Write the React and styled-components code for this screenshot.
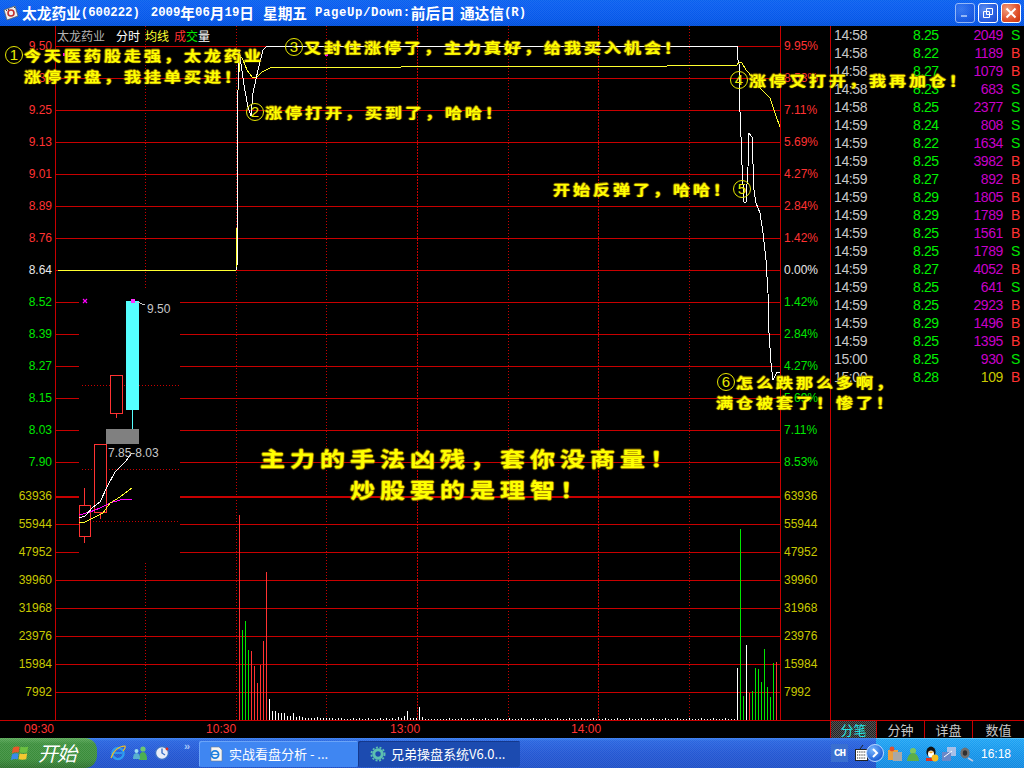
import React from "react";
import styled, { createGlobalStyle } from "styled-components";

const CJK = `"Noto Sans CJK SC", "Liberation Sans", sans-serif`;
const SANS = `"Liberation Sans", "Noto Sans CJK SC", sans-serif`;
const GRID = "#c80000";

const Global = createGlobalStyle`
  html, body { margin: 0; padding: 0; background: #000; }
  * { box-sizing: border-box; }
`;

const Screen = styled.div`
  width: 1024px; height: 768px; display: flex; flex-direction: column;
  background: #000; overflow: hidden; font-family: ${SANS};
`;

/* ---------- title bar ---------- */
const TitleBar = styled.header`
  height: 26px; flex: none; display: flex; align-items: center; padding: 0 3px 0 3px;
  color: #fff; font-weight: 700; white-space: pre;
  background:
    repeating-conic-gradient(rgba(255,255,255,.07) 0 25%, transparent 0 50%) 0 0 / 2px 2px,
    linear-gradient(#0a62ee 0, #0b5ff0 12%, #0558ea 70%, #0050dc 100%);
`;
const TitleIcon = styled.svg`width: 16px; height: 16px; flex: none; margin-right: 3px;`;
const TitleText = styled.div`flex: 1; display: flex; align-items: center; height: 26px;`;
const TitleCn = styled.span`
  font: 700 14.7px/26px ${CJK}; flex: none; margin-left: ${p => p.$ml || 0}px;
`;
const TitleAscii = styled.span`
  font: 700 12.3px/26px "Liberation Mono", monospace; flex: none;
  margin-left: ${p => p.$ml || 0}px; letter-spacing: ${p => p.$ls || 0}px;
`;
const WinButtons = styled.div`display: flex; gap: 3px; flex: none;`;
const WinButton = styled.div`
  width: 20px; height: 20px; border-radius: 3px; border: 1px solid #fff;
  display: flex; align-items: center; justify-content: center; opacity: ${p => p.$dim ? .55 : 1};
  background: ${p => p.$red
    ? "radial-gradient(circle at 30% 30%, #f0a080, #e0502a 60%, #c8300c)"
    : "radial-gradient(circle at 30% 30%, #5a8cf0, #2a5fe0 60%, #1c48c8)"};
`;

/* ---------- work area ---------- */
const Workspace = styled.main`flex: 1; display: flex; position: relative; min-height: 0;`;
const ChartColumn = styled.section`width: 831px; flex: none; display: flex; flex-direction: column; border-right: 1px solid ${GRID};`;
const ChartRow = styled.div`height: 694px; flex: none; display: flex;`;
const Axis = styled.div`
  width: ${p => p.$w}px; flex: none; padding-top: 4px; display: flex; flex-direction: column;
  font-size: 12px; align-items: ${p => p.$right ? "flex-start" : "flex-end"};
  padding-left: ${p => p.$right ? 3 : 0}px; padding-right: ${p => p.$right ? 0 : 3}px;
`;
const AxisLabel = styled.div`
  height: ${p => p.$h}px; line-height: ${p => p.$h}px; color: ${p => p.$c};
  margin-top: ${p => p.$mt || 0}px; white-space: pre;
`;
const Plot = styled.div`width: 726px; flex: none; position: relative;`;
const PlotSvg = styled.svg`display: block;`;
const LegendBar = styled.div`
  position: absolute; left: 2px; top: 2px; display: flex; font: 12px/15px ${CJK}; color: #fff; white-space: pre;
`;
const LegendPart = styled.span`color: ${p => p.$c}; margin-left: ${p => p.$ml || 0}px;`;
const TimeAxis = styled.div`
  flex: 1; border-top: 1px solid ${GRID}; display: flex; padding-left: 24px;
  font-size: 12px; line-height: 17px; color: #ff3232;
`;
const TimeLabel = styled.span`margin-left: ${p => p.$ml || 0}px;`;

/* ---------- ticks ---------- */
const SidePanel = styled.aside`flex: 1; display: flex; flex-direction: column; min-width: 0;`;
const TickList = styled.div`flex: 1; padding-left: 3px;`;
const TickRow = styled.div`
  height: 18px; display: grid; grid-template-columns: 79px 40px 50px 18px;
  font-size: 14px; line-height: 18px; letter-spacing: -.4px;
`;
const Cell = styled.span`color: ${p => p.$c}; text-align: ${p => p.$end ? "right" : "left"}; padding-left: ${p => p.$pl || 0}px;`;
const Tabs = styled.nav`height: 18px; flex: none; display: flex; border-top: 1px solid ${GRID};`;
const Tab = styled.div`
  width: ${p => p.$w}px; flex: none; text-align: center; font: 13px/17px ${CJK};
  color: ${p => p.$on ? "#22e6e6" : "#c8c8c8"}; border-right: 1px solid ${GRID};
  background: ${p => p.$on ? "repeating-conic-gradient(#555 0 25%, #222 0 50%) 0 0 / 2px 2px" : "#000"};
  &:last-child { border-right: 0; }
`;

/* ---------- annotations ---------- */
const Note = styled.div`
  position: absolute; left: ${p => p.$x}px; top: ${p => p.$y}px; white-space: pre;
  display: flex; align-items: center; color: #ffff00; height: ${p => p.$big ? 30 : 20}px;
`;
const NoteText = styled.span`
  display: inline-block; transform: scaleY(.82); transform-origin: 50% 50%;
  font: 700 ${p => p.$big ? 25 : 17}px/${p => p.$big ? 30 : 20}px ${CJK};
  letter-spacing: ${p => p.$big ? 5 : 3}px;
  text-shadow: .7px 0 1px #a88a00, -.7px 0 1px #a88a00, 0 .7px 1px #a88a00, 0 -.7px 1px #a88a00;
`;
const Ring = styled.span`
  flex: none; display: flex; width: 18px; height: 18px; border: 1px solid #e8e800; border-radius: 50%;
  align-items: center; justify-content: center; margin-right: ${p => p.$after ? 0 : 1}px;
  font: 400 15px/16px ${SANS}; color: #e8e800;
`;

/* ---------- taskbar ---------- */
const Taskbar = styled.footer`
  height: 30px; flex: none; display: flex; align-items: stretch; color: #fff;
  background:
    repeating-conic-gradient(rgba(255,255,255,.08) 0 25%, transparent 0 50%) 0 0 / 2px 2px,
    linear-gradient(#3a80f0 0, #2a66e0 10%, #2458d4 50%, #1f50c8 100%);
`;
const StartButton = styled.div`
  width: 97px; flex: none; display: flex; align-items: center; gap: 8px; padding-left: 11px;
  border-radius: 0 12px 12px 0;
  background:
    repeating-conic-gradient(rgba(255,255,255,.1) 0 25%, transparent 0 50%) 0 0 / 2px 2px,
    linear-gradient(#5aa858 0, #3c8f3c 20%, #3a8c3a 70%, #2c702c 100%);
`;
const StartLabel = styled.span`font: italic 400 20px/30px ${CJK}; letter-spacing: -1px;`;
const QuickLaunch = styled.div`width: 102px; flex: none; display: flex; align-items: center; gap: 6px; padding-left: 13px;`;
const Chevrons = styled.span`font: 700 11px/12px ${SANS}; color: #a8c8f8; margin: -14px 0 0 8px;`;
const TaskButton = styled.div`
  width: ${p => p.$w}px; flex: none; display: flex; align-items: center; gap: 5px; padding-left: ${p => p.$pl}px;
  margin: 3px 0 1px; border-radius: 2px; font: 13px/20px ${CJK}; white-space: pre;
  background: ${p => p.$dark ? "#1c4bb0" : "#3f86f2"};
  box-shadow: ${p => p.$dark ? "inset 1px 1px 0 #14388c" : "inset 1px 1px 0 #6aa4f8"};
`;
const Spacer = styled.div`flex: 1;`;
const LangBox = styled.div`
  width: 17px; height: 18px; align-self: center; background: #3a6fd0; margin-right: 7px;
  font: 700 11px/18px "Liberation Mono", monospace; text-align: center; letter-spacing: -1px;
`;
const KeyIcon = styled.svg`width: 13px; height: 18px; align-self: center; flex: none; margin-right: 8px;`;
const Tray = styled.div`
  width: 148px; flex: none; display: flex; align-items: center; gap: 2px; position: relative; padding-left: 11px;
  background:
    repeating-conic-gradient(rgba(255,255,255,.12) 0 25%, transparent 0 50%) 0 0 / 2px 2px,
    linear-gradient(#1ea4f4 0, #1294ea 50%, #0f88e0 100%);
  border-top: 1px solid #50c0f8;
`;
const TrayChevron = styled.div`
  position: absolute; left: -10px; top: 5px; width: 18px; height: 18px; border-radius: 50%;
  background: radial-gradient(circle at 35% 30%, #7ab8ff, #1f62d8 70%); border: 1px solid #bcd8ff;
  display: flex; align-items: center; justify-content: center;
`;
const Clock = styled.span`margin-left: 4px; font: 12px/28px ${SANS}; letter-spacing: 0;`;
const Ico = styled.svg`width: ${p => p.$s || 16}px; height: ${p => p.$s || 16}px; flex: none;`;

/* ---------- data ---------- */
const leftTop = [
  ["9.50", "#ff3232"], ["9.38", "#ff3232"], ["9.25", "#ff3232"], ["9.13", "#ff3232"], ["9.01", "#ff3232"],
  ["8.89", "#ff3232"], ["8.76", "#ff3232"], ["8.64", "#e8e8e8"], ["8.52", "#00e600"], ["8.39", "#00e600"],
  ["8.27", "#00e600"], ["8.15", "#00e600"], ["8.03", "#00e600"], ["7.90", "#00e600"],
];
const rightTop = [
  ["9.95%", "#ff3232"], ["8.53%", "#ff3232"], ["7.11%", "#ff3232"], ["5.69%", "#ff3232"], ["4.27%", "#ff3232"],
  ["2.84%", "#ff3232"], ["1.42%", "#ff3232"], ["0.00%", "#e8e8e8"], ["1.42%", "#00e600"], ["2.84%", "#00e600"],
  ["4.27%", "#00e600"], ["5.69%", "#00e600"], ["7.11%", "#00e600"], ["8.53%", "#00e600"],
];
const vols = ["63936", "55944", "47952", "39960", "31968", "23976", "15984", "7992"];
const ticks = [
  ["14:58","8.25","2049","S"],["14:58","8.22","1189","B"],["14:58","8.27","1079","B"],["14:58","8.23","683","S"],
  ["14:58","8.25","2377","S"],["14:59","8.24","808","S"],["14:59","8.22","1634","S"],["14:59","8.25","3982","B"],
  ["14:59","8.27","892","B"],["14:59","8.29","1805","B"],["14:59","8.29","1789","B"],["14:59","8.25","1561","B"],
  ["14:59","8.25","1789","S"],["14:59","8.27","4052","B"],["14:59","8.25","641","S"],["14:59","8.25","2923","B"],
  ["14:59","8.29","1496","B"],["14:59","8.25","1395","B"],["15:00","8.25","930","S"],["15:00","8.28","109","B"],
];
const priceLine = "237,270 238,90 239,50 240,57 244,85 248,107 251,116 253,93 258,70 263,50 267,46 737,46 738,60 739,63 740,112 741,137 742,165 744,202 746,202 748,167 749,133 752,137 754,190 756,203 760,213 763,233 766,260 768,293 769,333 771,363 773,380 777,372 780,372";
const avgLine = "58,270 236,270 237,230 238,90 240,55 243,60 247,70 252,77 256,78 262,72 270,68 288,67 401,67 402,66 667,66 668,65 737,65 739,62 742,63 746,70 749,73 755,82 762,90 766,94 770,98 775,113 780,127";
const hLines = [46,78,110,142,174,206,238,270,302,334,366,398,430,462,496,524,552,580,608,636,664,692];
const vSparse = [145,236,326,508,689];
const vDense = [417,598];
const vSolid = [55,780];

const bigBars = [
  [239,515,"#ff3232"],[242,630,"#00e600"],[245,621,"#00e600"],[248,650,"#00e600"],[251,651,"#ff3232"],
  [254,666,"#ff3232"],[257,683,"#ff3232"],[260,665,"#ff3232"],[263,641,"#ff3232"],[266,572,"#ff3232"],
  [737,668,"#fff"],[740,529,"#00e600"],[743,696,"#00e600"],[746,645,"#fff"],[749,693,"#ff3232"],
  [752,691,"#00e600"],[755,668,"#00e600"],[758,669,"#00e600"],[761,682,"#00e600"],[764,649,"#00e600"],
  [767,687,"#00e600"],[770,697,"#00e600"],[773,663,"#00e600"],[776,662,"#ff3232"],
];
const smallHeights = [21,9,9,7,7,7,4,4,7,3,4,3,2,2,2,2,3,2,2,2,2,2,1,2,2,1,1,1,2,1,2,1,1,2,1,1,1,2,1,2,1,2,1,3,2,4,9,2,2,2,13,3,1,1,1,1,1];
const smallBars = [];
for (let i = 0, x = 269; x < 736; i++, x += 3) {
  smallBars.push([x, smallHeights[i] ?? (i % 4 === 0 ? 2 : 1)]);
}

const Chart = () => (
  <PlotSvg width="726" height="694" viewBox="55 26 726 694">
    <g stroke={GRID} shapeRendering="crispEdges">
      {hLines.map(y => <line key={y} x1="55" x2="781" y1={y + .5} y2={y + .5} strokeWidth={y === 496 ? 2 : 1} />)}
      {vSolid.map(x => <line key={x} x1={x + .5} x2={x + .5} y1="26" y2="720" />)}
      {vDense.map(x => <line key={x} x1={x + .5} x2={x + .5} y1="26" y2="720" strokeDasharray="2 1" />)}
      {vSparse.map(x => <line key={x} x1={x + .5} x2={x + .5} y1="26" y2="720" strokeDasharray="1 2" />)}
    </g>
    {bigBars.map(([x, y, c]) => <line key={x} x1={x + .5} x2={x + .5} y1={y} y2="720" stroke={c} shapeRendering="crispEdges" />)}
    {smallBars.map(([x, h]) => <rect key={x} x={x} y={720 - h} width="1" height={h} fill="#fff" shapeRendering="crispEdges" />)}
    <g fill="none" strokeWidth="1" shapeRendering="crispEdges">
      <polyline points={avgLine} stroke="#ffff30" />
      <polyline points={priceLine} stroke="#fff" />
    </g>
    <g fill="#ff00ff">
      <rect x="63" y="53" width="3" height="3" />
      <rect x="325" y="53" width="3" height="3" />
    </g>
    {/* inset candlestick window */}
    <rect x="79" y="289" width="101" height="272" fill="#000" />
    <g stroke={GRID} strokeDasharray="1 2" shapeRendering="crispEdges">
      <line x1="82" x2="180" y1="385.5" y2="385.5" />
      <line x1="82" x2="180" y1="469.5" y2="469.5" />
      <line x1="90" x2="180" y1="521.5" y2="521.5" />
    </g>
    <g shapeRendering="crispEdges">
      <rect x="126" y="301" width="13" height="109" fill="#55ffff" />
      <line x1="132.5" x2="132.5" y1="410" y2="429" stroke="#55ffff" />
      <rect x="106" y="429" width="33" height="15" fill="#808080" />
      <g fill="#000" stroke="#ff3232">
        <line x1="116.5" x2="116.5" y1="413" y2="418" />
        <rect x="110.5" y="375.5" width="12" height="38" />
        <line x1="100.5" x2="100.5" y1="512" y2="519" />
        <rect x="94.5" y="444.5" width="12" height="68" />
        <line x1="84.5" x2="84.5" y1="488" y2="543" />
        <rect x="79.5" y="505.5" width="11" height="31" />
      </g>
    </g>
    <g fill="none" strokeWidth="1" shapeRendering="crispEdges">
      <polyline points="79,515 90,512 100,508 110,503 120,500 132,499" stroke="#ff00ff" />
      <polyline points="79,522 85,522 95,517 103,513 110,503 120,497 132,488" stroke="#ffff30" />
      <polyline points="79,518 85,516 93,507 100,502 107,487 115,472 125,462 132,453" stroke="#fff" />
      <polyline points="137,302 145,305" stroke="#c8c8c8" />
    </g>
    <path d="M83 299l4 4M87 299l-4 4" stroke="#ff00ff" strokeWidth="1.2" />
    <rect x="131" y="299" width="4" height="4" fill="#ff30ff" />
    <text x="147" y="313" fontSize="12" fill="#c8c8c8" fontFamily="Liberation Sans">9.50</text>
    <text x="108" y="457" fontSize="12" fill="#c8c8c8" fontFamily="Liberation Sans">7.85-8.03</text>
  </PlotSvg>
);

const IE = () => (
  <Ico viewBox="0 0 16 16">
    <circle cx="8" cy="8.5" r="5.6" fill="none" stroke="#2f9cf0" strokeWidth="2.4" />
    <path d="M4 8h8" stroke="#2f9cf0" strokeWidth="1.8" />
    <path d="M1 13C3 6 9 1 15 1c1 2-1 4-2 5" fill="none" stroke="#f4c020" strokeWidth="1.1" />
  </Ico>
);
const Gear = () => (
  <Ico viewBox="0 0 16 16">
    <circle cx="8" cy="8" r="4.2" fill="none" stroke="#5cc0b0" strokeWidth="3" />
    <circle cx="8" cy="8" r="6.6" fill="none" stroke="#5cc0b0" strokeWidth="1.8" strokeDasharray="2 1.6" />
  </Ico>
);
const DocIE = () => (
  <Ico viewBox="0 0 16 16">
    <path d="M3 1h8l3 3v11H3z" fill="#f4f4f4" stroke="#6a7a90" strokeWidth=".6" />
    <circle cx="7" cy="8.5" r="3.6" fill="none" stroke="#1f80e0" strokeWidth="1.8" />
    <path d="M4 8.5h6" stroke="#1f80e0" strokeWidth="1.2" />
  </Ico>
);

const COMMA = "\uFF0C";
const BANG = "\uFF01";

const App = () => (
  <Screen>
    <Global />
    <TitleBar>
      <TitleIcon viewBox="0 0 16 16">
        <path d="M1 5l11-4 3 10-11 4z" fill="#f0f0f0" stroke="#606060" strokeWidth=".8" />
        <circle cx="8" cy="8" r="3" fill="none" stroke="#c03030" strokeWidth="1.6" />
        <path d="M3 5l1 1M5 4l1 1M11 2l1 1" stroke="#404040" />
      </TitleIcon>
      <TitleText>
        <TitleCn>太龙药业</TitleCn>
        <TitleAscii>(600222)</TitleAscii>
        <TitleAscii $ml={11}>2009</TitleAscii>
        <TitleCn>年</TitleCn>
        <TitleAscii>06</TitleAscii>
        <TitleCn>月</TitleCn>
        <TitleAscii>19</TitleAscii>
        <TitleCn>日</TitleCn>
        <TitleCn $ml={9}>星期五</TitleCn>
        <TitleAscii $ml={8} $ls={.6}>PageUp/Down:</TitleAscii>
        <TitleCn>前后日</TitleCn>
        <TitleCn $ml={5}>通达信</TitleCn>
        <TitleAscii>(R)</TitleAscii>
      </TitleText>
      <WinButtons>
        <WinButton $dim><Ico $s={12} viewBox="0 0 12 12"><rect x="2" y="8" width="6" height="2" fill="#fff" /></Ico></WinButton>
        <WinButton><Ico $s={12} viewBox="0 0 12 12"><path d="M4.5 1.5h6v6h-6zM1.5 4.5h6v6h-6z" fill="none" stroke="#fff" /></Ico></WinButton>
        <WinButton $red><Ico $s={14} viewBox="0 0 14 14"><path d="M2.5 2.5l9 9M11.5 2.5l-9 9" stroke="#fff" strokeWidth="2" /></Ico></WinButton>
      </WinButtons>
    </TitleBar>
    <Workspace>
      <ChartColumn>
        <ChartRow>
          <Axis $w={55}>
            {leftTop.map(([t, c]) => <AxisLabel key={t} $h={32} $c={c}>{t}</AxisLabel>)}
            {vols.map((t, i) => <AxisLabel key={t} $h={28} $c="#c8c800" $mt={i === 0 ? 4 : 0}>{t}</AxisLabel>)}
          </Axis>
          <Plot>
            <Chart />
            <LegendBar>
              <LegendPart $c="#b4b4b4">太龙药业</LegendPart>
              <LegendPart $c="#fff" $ml={11}>分时</LegendPart>
              <LegendPart $c="#ffff30" $ml={5}>均线</LegendPart>
              <LegendPart $c="#ff3232" $ml={5}>成</LegendPart>
              <LegendPart $c="#00e600">交</LegendPart>
              <LegendPart $c="#fff">量</LegendPart>
            </LegendBar>
          </Plot>
          <Axis $w={49} $right>
            {rightTop.map(([t, c], i) => <AxisLabel key={i} $h={32} $c={c}>{t}</AxisLabel>)}
            {vols.map((t, i) => <AxisLabel key={t} $h={28} $c="#c8c800" $mt={i === 0 ? 4 : 0}>{t}</AxisLabel>)}
          </Axis>
        </ChartRow>
        <TimeAxis>
          <TimeLabel>09:30</TimeLabel>
          <TimeLabel $ml={152}>10:30</TimeLabel>
          <TimeLabel $ml={154}>13:00</TimeLabel>
          <TimeLabel $ml={151}>14:00</TimeLabel>
        </TimeAxis>
      </ChartColumn>
      <SidePanel>
        <TickList>
          {ticks.map(([t, p, v, f], i) => (
            <TickRow key={i}>
              <Cell $c="#c8c8c8">{t}</Cell>
              <Cell $c="#00f000">{p}</Cell>
              <Cell $c={i === 19 ? "#c8c800" : "#c800c8"} $end>{v}</Cell>
              <Cell $c={f === "B" ? "#ff3232" : "#00e600"} $pl={8}>{f}</Cell>
            </TickRow>
          ))}
        </TickList>
        <Tabs>
          <Tab $w={46} $on>分笔</Tab>
          <Tab $w={48}>分钟</Tab>
          <Tab $w={48}>详盘</Tab>
          <Tab $w={51}>数值</Tab>
        </Tabs>
      </SidePanel>

      <Note $x={5} $y={19}><Ring>1</Ring><NoteText>{`今天医药股走强${COMMA}太龙药业`}</NoteText></Note>
      <Note $x={24} $y={40}><NoteText>{`涨停开盘${COMMA}我挂单买进${BANG}`}</NoteText></Note>
      <Note $x={246} $y={76}><Ring>2</Ring><NoteText>{`涨停打开${COMMA}买到了${COMMA}哈哈${BANG}`}</NoteText></Note>
      <Note $x={285} $y={11}><Ring>3</Ring><NoteText>{`又封住涨停了${COMMA}主力真好${COMMA}给我买入机会${BANG}`}</NoteText></Note>
      <Note $x={730} $y={44}><Ring>4</Ring><NoteText>{`涨停又打开${COMMA}我再加仓${BANG}`}</NoteText></Note>
      <Note $x={553} $y={153}><NoteText>{`开始反弹了${COMMA}哈哈${BANG}`}</NoteText><Ring $after>5</Ring></Note>
      <Note $x={717} $y={346}><Ring>6</Ring><NoteText>{`怎么跌那么多啊${COMMA}`}</NoteText></Note>
      <Note $x={716} $y={366}><NoteText>{`满仓被套了${BANG}惨了${BANG}`}</NoteText></Note>
      <Note $big $x={260} $y={417}><NoteText $big>{`主力的手法凶残${COMMA}套你没商量${BANG}`}</NoteText></Note>
      <Note $big $x={350} $y={448}><NoteText $big>{`炒股要的是理智${BANG}`}</NoteText></Note>
    </Workspace>
    <Taskbar>
      <StartButton>
        <Ico $s={19} viewBox="0 0 20 20">
          <path d="M2 4q3-2 7-1l-1 6q-4-1-7 1z" fill="#e8582a" />
          <path d="M10 3q4 1 8 0l-1 6q-4 1-8 0z" fill="#6cc040" />
          <path d="M1 11q3-2 7-1l-1 6q-4-1-7 1z" fill="#3a8ae8" />
          <path d="M9 10q4 1 8 0l-1 6q-4 1-8 0z" fill="#f4c830" />
        </Ico>
        <StartLabel>开始</StartLabel>
      </StartButton>
      <QuickLaunch>
        <IE />
        <Ico viewBox="0 0 16 16">
          <circle cx="11" cy="4" r="2.6" fill="#6ec870" /><path d="M7 15q0-8 4-8t4 8z" fill="#4caf50" />
          <circle cx="4.5" cy="6" r="2" fill="#9adcf0" /><path d="M1 14q0-6 3.5-6T8 14z" fill="#58b0d0" />
        </Ico>
        <Ico viewBox="0 0 16 16">
          <circle cx="8" cy="8" r="6.5" fill="#e8eef8" stroke="#3a70c8" strokeWidth="1.4" />
          <path d="M8 3.5V8l3 2" stroke="#3a70c8" strokeWidth="1.4" fill="none" />
          <circle cx="13" cy="4" r="1.4" fill="#e03020" />
        </Ico>
        <Chevrons>»</Chevrons>
      </QuickLaunch>
      <TaskButton $w={159} $pl={9}><DocIE />实战看盘分析 - ...</TaskButton>
      <TaskButton $w={162} $pl={12} $dark><Gear />兄弟操盘系统V6.0...</TaskButton>
      <Spacer />
      <LangBox>CH</LangBox>
      <KeyIcon viewBox="0 0 13 18">
        <rect x=".5" y="5.5" width="12" height="11" fill="#fff" stroke="#222" />
        <path d="M2 8h9M2 11h9M2 14h9" stroke="#222" strokeDasharray="1.2 1" />
        <path d="M5 5l3-4" stroke="#222" />
      </KeyIcon>
      <Tray>
        <TrayChevron>
          <Ico $s={10} viewBox="0 0 10 10"><path d="M3 1l4 4-4 4" fill="none" stroke="#fff" strokeWidth="2" /></Ico>
        </TrayChevron>
        <Ico viewBox="0 0 16 16"><rect x="1" y="4" width="10" height="10" fill="#e8a040" /><rect x="6" y="6" width="9" height="9" fill="#a8a8a8" /><circle cx="5" cy="3" r="2.4" fill="#e05030" /></Ico>
        <Ico viewBox="0 0 16 16"><circle cx="8" cy="5" r="3" fill="#7cc860" /><path d="M2 15q1-8 6-8t6 8z" fill="#5cae48" /></Ico>
        <Ico viewBox="0 0 16 16"><ellipse cx="8" cy="6" rx="4.6" ry="5.4" fill="#111" /><ellipse cx="8" cy="8" rx="3" ry="3.6" fill="#fff" /><path d="M5 5.5h6l-3 2z" fill="#f0a020" /><path d="M3 12h10v3H3z" fill="#e03020" /><circle cx="12" cy="12" r="3.4" fill="#f4c020" /></Ico>
        <Ico viewBox="0 0 16 16"><rect x="6" y="1" width="9" height="9" fill="#a8c0e8" /><rect x="1" y="6" width="9" height="9" fill="#6888c8" /><path d="M3 11l8-6" stroke="#fff" /></Ico>
        <Ico viewBox="0 0 16 16"><ellipse cx="6" cy="7" rx="4.6" ry="5.4" fill="#707070" /><ellipse cx="6" cy="7" rx="2.2" ry="2.8" fill="#303030" /><path d="M9 12l5 3" stroke="#c0c8e0" strokeWidth="1.6" /></Ico>
        <Clock>16:18</Clock>
      </Tray>
    </Taskbar>
  </Screen>
);

export default App;
